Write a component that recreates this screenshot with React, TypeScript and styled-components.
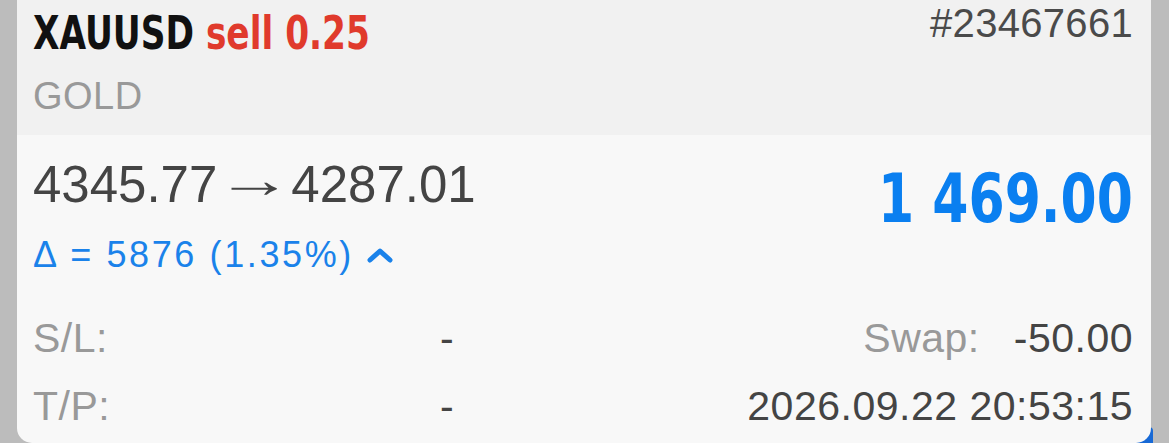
import styled, { createGlobalStyle } from "styled-components"

const Global = createGlobalStyle`
  html, body {
    margin: 0;
    padding: 0;
    background: #bcbcbc;
  }
  body {
    width: 1169px;
    height: 443px;
    overflow: hidden;
    font-family: "Liberation Sans", Arial, sans-serif;
  }
`

const Page = styled.div`
  position: relative;
  height: 443px;
  padding: 0 18px 0 17px;
  box-sizing: border-box;
`

const Corner = styled.div`
  position: absolute;
  right: 16px;
  bottom: -6px;
  width: 22px;
  height: 22px;
  background: #1769d6;
  border-radius: 4px;
`

const Card = styled.div`
  position: relative;
  height: 443px;
  background: #f8f8f8;
  border-radius: 0 0 15px 15px;
  overflow: hidden;
  display: flex;
  flex-direction: column;
`

const Header = styled.div`
  height: 135px;
  background: #f1f1f1;
  padding: 0 18px 0 16px;
  display: flex;
  justify-content: space-between;
  box-sizing: border-box;
`

const TitleBlock = styled.div`
  display: flex;
  flex-direction: column;
  align-items: flex-start;
`

const Title = styled.div`
  font-family: "DejaVu Sans Condensed", "DejaVu Sans", sans-serif;
  font-weight: 700;
  font-size: 46px;
  line-height: 1;
  margin-top: 10px;
  color: #111;
  white-space: nowrap;
  transform: scaleX(0.83);
  transform-origin: left center;
`

const Side = styled.span`
  color: #e03a2c;
`

const Subtitle = styled.div`
  font-size: 38px;
  line-height: 1;
  color: #999;
  margin-top: 21px;
  letter-spacing: 0.5px;
`

const Ticket = styled.div`
  font-size: 40px;
  line-height: 1;
  color: #4a4a4a;
  margin-top: 3px;
  letter-spacing: 0.3px;
`

const Body = styled.div`
  padding: 24px 18px 0 16px;
  display: flex;
  flex-direction: column;
`

const PriceRow = styled.div`
  display: flex;
  justify-content: space-between;
  align-items: flex-start;
`

const PriceBlock = styled.div`
  display: flex;
  flex-direction: column;
`

const Prices = styled.div`
  font-size: 51px;
  line-height: 1;
  color: #444;
  white-space: nowrap;
  display: flex;
  align-items: baseline;
`

const Arrow = styled.span`
  display: inline-block;
  margin: 0 11px 0 12px;
  transform: translateY(-5px) scaleX(1.5);
`

const Delta = styled.div`
  font-size: 36px;
  line-height: 1;
  color: #1a82ea;
  margin-top: 27px;
  display: flex;
  align-items: center;
  gap: 12px;
  letter-spacing: 2.6px;
`

const Profit = styled.div`
  font-family: "DejaVu Sans Condensed", "DejaVu Sans", sans-serif;
  font-weight: 700;
  font-size: 68px;
  line-height: 1;
  color: #0a7ff0;
  margin-top: 6px;
  white-space: nowrap;
  transform: scaleX(0.85);
  transform-origin: right center;
`

const Details = styled.div`
  display: grid;
  grid-template-columns: 394px 40px 1fr;
  row-gap: 27px;
  margin-top: 45px;
  font-size: 41px;
  line-height: 1;
  letter-spacing: 0.5px;
`

const Label = styled.span`
  color: #999;
`

const Value = styled.span`
  color: #444;
`

const Dash = styled(Value)`
  text-align: center;
`

const Right = styled.div`
  display: flex;
  justify-content: flex-end;
  gap: 34px;
`

const Chevron = () => (
  <svg width="28" height="18" viewBox="0 0 28 18">
    <path d="M4 14 L14 5 L24 14" fill="none" stroke="#1a82ea" strokeWidth="5" strokeLinecap="round" strokeLinejoin="round" />
  </svg>
)

export default function App() {
  return (
    <>
      <Global />
      <Page>
        <Corner />
        <Card>
          <Header>
            <TitleBlock>
              <Title>
                XAUUSD <Side>sell 0.25</Side>
              </Title>
              <Subtitle>GOLD</Subtitle>
            </TitleBlock>
            <Ticket>#23467661</Ticket>
          </Header>
          <Body>
            <PriceRow>
              <PriceBlock>
                <Prices>
                  <span>4345.77</span>
                  <Arrow>→</Arrow>
                  <span>4287.01</span>
                </Prices>
                <Delta>
                  Δ = 5876 (1.35%) <Chevron />
                </Delta>
              </PriceBlock>
              <Profit>1 469.00</Profit>
            </PriceRow>
            <Details>
              <Label>S/L:</Label>
              <Dash>-</Dash>
              <Right>
                <Label>Swap:</Label>
                <Value>-50.00</Value>
              </Right>
              <Label>T/P:</Label>
              <Dash>-</Dash>
              <Right>
                <Value>2026.09.22 20:53:15</Value>
              </Right>
            </Details>
          </Body>
        </Card>
      </Page>
    </>
  )
}
